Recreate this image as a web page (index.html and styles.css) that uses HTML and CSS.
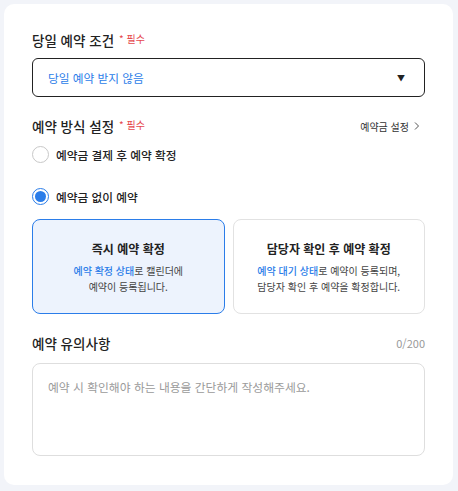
FILE: index.html
```html
<!DOCTYPE html>
<html lang="ko">
<head>
<meta charset="utf-8">
<link rel="stylesheet" href="styles.css">
</head>
<body>
<div class="card">
  <div class="label-row first">
    <span class="label">당일 예약 조건</span><span class="req">* 필수</span>
  </div>
  <div class="select">
    <span class="select-text">당일 예약 받지 않음</span>
    <span class="caret">▼</span>
  </div>

  <div class="label-row second">
    <span class="label">예약 방식 설정</span><span class="req">* 필수</span>
    <span class="link">예약금 설정 <svg class="chev" width="6" height="10" viewBox="0 0 6 10"><path d="M1 1.5 L4.5 5 L1 8.5" fill="none" stroke="#555" stroke-width="1"/></svg></span>
  </div>
  <div class="radio-row">
    <span class="radio"></span><span class="radio-text">예약금 결제 후 예약 확정</span>
  </div>
  <div class="radio-row r2">
    <span class="radio on"><span class="dot"></span></span><span class="radio-text">예약금 없이 예약</span>
  </div>

  <div class="options">
    <div class="opt active">
      <div class="opt-title">즉시 예약 확정</div>
      <div class="opt-desc"><span class="hl">예약 확정 상태</span>로 캘린더에<br>예약이 등록됩니다.</div>
    </div>
    <div class="opt">
      <div class="opt-title">담당자 확인 후 예약 확정</div>
      <div class="opt-desc"><span class="hl">예약 대기 상태</span>로 예약이 등록되며,<br>담당자 확인 후 예약을 확정합니다.</div>
    </div>
  </div>

  <div class="label-row third">
    <span class="label">예약 유의사항</span>
    <span class="count">0/200</span>
  </div>
  <div class="textarea">예약 시 확인해야 하는 내용을 간단하게 작성해주세요.</div>
</div>
</body>
</html>
```
FILE: styles.css
```css
* { box-sizing: border-box; }
html, body { margin: 0; }
body {
  background: #f2f4f9;
  padding: 4px;
  font-family: "Noto Sans CJK KR", "Noto Sans", sans-serif;
  color: #222;
}
.card {
  background: #fff;
  border-radius: 10px;
  width: 449px;
  height: 481px;
  padding: 25px 28px 0 28px;
}
.label-row {
  display: flex;
  align-items: center;
  height: 22px;
}
.label {
  font-size: 13.5px;
  font-weight: 500;
  color: #222;
}
.req {
  font-size: 10px;
  color: #e5484d;
  margin-left: 5px;
  margin-top: -4px;
}
.select {
  margin-top: 7px;
  height: 39px;
  border: 1px solid #222;
  border-radius: 6px;
  display: flex;
  align-items: center;
  justify-content: space-between;
  padding: 0 19px 0 15px;
}
.select-text {
  font-size: 11.7px;
  color: #2b7de9;
}
.caret {
  font-size: 8px;
  color: #222;
}
.label-row.second { margin-top: 18px; }
.link {
  margin-left: auto;
  font-size: 10px;
  color: #333;
  display: flex;
  align-items: center;
  gap: 5px;
  margin-right: 5px;
}
.radio-row {
  display: flex;
  align-items: center;
  height: 22px;
  margin-top: 6px;
}
.radio-row.r2 { margin-top: 20px; }
.radio {
  width: 17px;
  height: 17px;
  border-radius: 50%;
  border: 1px solid #c8c8c8;
  display: flex;
  align-items: center;
  justify-content: center;
  background: #fff;
}
.radio.on { border-color: #2b7de9; }
.dot {
  width: 11px;
  height: 11px;
  border-radius: 50%;
  background: #2b7de9;
}
.radio-text {
  font-size: 11.7px;
  font-weight: 500;
  margin-left: 7px;
  color: #222;
}
.options {
  margin-top: 12px;
  display: grid;
  grid-template-columns: 1fr 1fr;
  gap: 8px;
}
.opt {
  height: 95px;
  border: 1px solid #e2e2e2;
  border-radius: 8px;
  display: flex;
  flex-direction: column;
  align-items: center;
  justify-content: center;
  text-align: center;
  background: #fff;
}
.opt.active {
  background: #edf3fd;
  border-color: #2b7de9;
}
.opt-title {
  font-size: 12px;
  font-weight: 700;
  color: #222;
  line-height: 20px;
}
.opt-desc {
  margin-top: 4px;
  font-size: 10px;
  line-height: 16px;
  color: #444;
}
.hl { color: #2b7de9; font-weight: 500; }
.label-row.third { margin-top: 18px; }
.count {
  margin-left: auto;
  font-size: 11px;
  color: #999;
}
.textarea {
  margin-top: 9px;
  height: 93px;
  border: 1px solid #dedede;
  border-radius: 8px;
  padding: 13px 15px;
  font-size: 11.8px;
  line-height: 20px;
  color: #9a9a9a;
}
```
